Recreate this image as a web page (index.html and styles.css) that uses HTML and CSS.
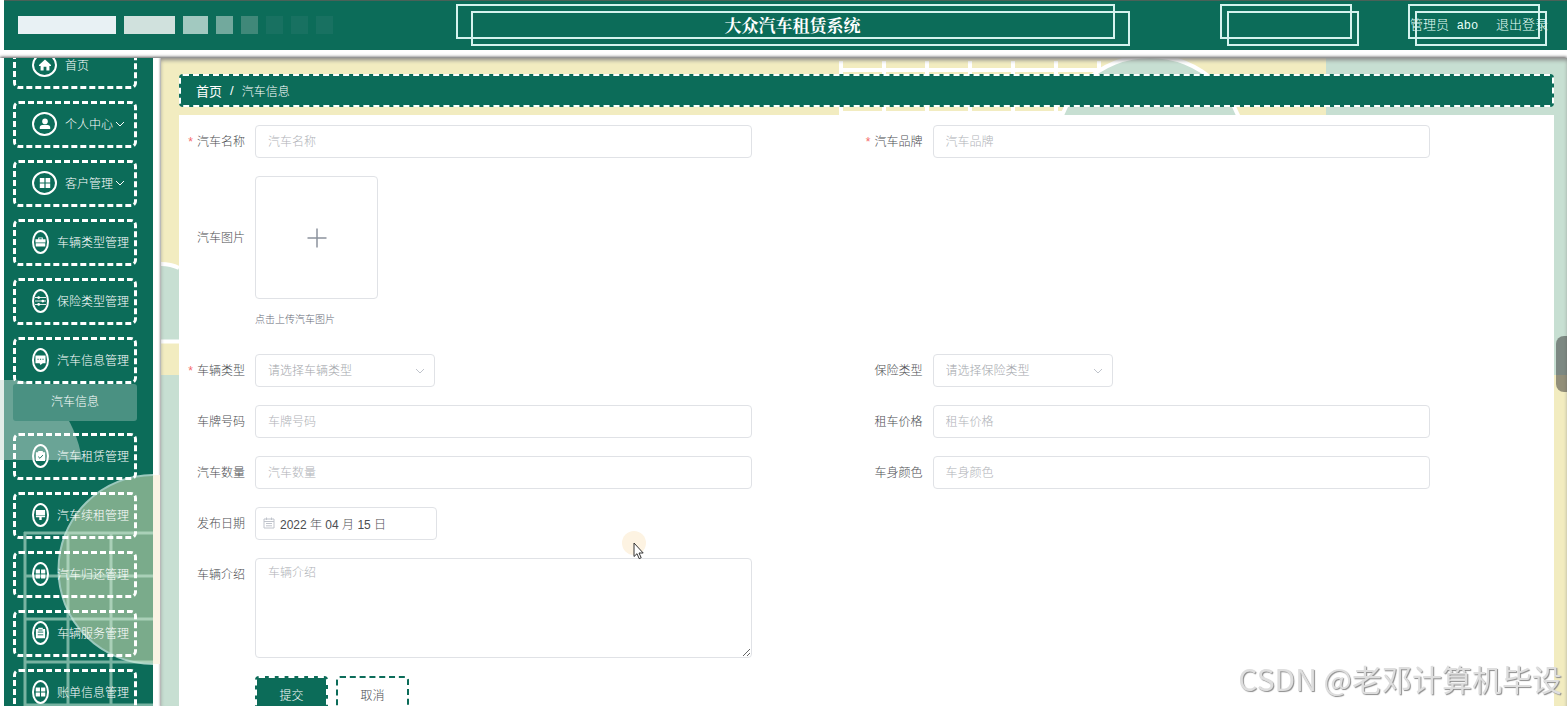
FILE: index.html
```
<!DOCTYPE html>
<html lang="zh-CN">
  <head>
    <meta charset="UTF-8" />
    <meta name="viewport" content="width=device-width, initial-scale=1.0" />
    <title>大众汽车租赁系统</title>
    <link rel="stylesheet" href="styles.css">
  </head>
  <body>
    <svg class="sprite" aria-hidden="true">
      <symbol id="i-home" viewBox="0 0 12 12"><path d="M6 .5 0 6V7H1.600v4.600h3V7.800h2.800v3.800h3V7H12V6z" /></symbol>
      <symbol id="i-user" viewBox="0 0 12 12"><circle cx="6" cy="3.4" r="2.8" /><path d="M0.8 11V9.600Q0.800 7 3.400 7h5.200q2.600 0 2.600 2.600V11z" /></symbol>
      <symbol id="i-menu" viewBox="0 0 12 12"><path d="M0.8 1h4.600v4.400H0.800zM6.600 1h4.600v4.400H6.600zM0.800 6.600h4.600V11H0.800zM6.600 6.600h4.600V11H6.600z" /></symbol>
      <symbol id="i-case" viewBox="0 0 12 12"><path d="M3.500 3V1h5v2H11.500v3.500H.5V3zM4.700 3h2.600V2H4.700zM.8 7.400h10.400V11H.8z" /></symbol>
      <symbol id="i-operation" viewBox="0 0 12 12"><path d="M0 2.200h12M0 6h12M0 9.800h12" fill="none" stroke="currentColor" stroke-width="1" /><circle cx="4" cy="2.200" r="1.500" /><circle cx="8.500" cy="6" r="1.500" /><circle cx="4" cy="9.800" r="1.500" /></symbol>
      <symbol id="i-chat" viewBox="0 0 12 12"><path d="M.5 1h11v8.500H8.500L6 11.500 5 9.500H.5z" /><path d="M2.700 5.200h1.300M5.400 5.200h1.300M8.100 5.200h1.300" stroke="#0c6c59" stroke-width="1.200" /></symbol>
      <symbol id="i-check" viewBox="0 0 12 12"><path d="M1 2h2.500V.5h5V2H11v9.500H1z" /><path d="M3.500 6.700 5.400 8.500 8.600 5" fill="none" stroke="#0c6c59" stroke-width="1" /></symbol>
      <symbol id="i-brush" viewBox="0 0 12 12"><path d="M1 .5h10v6H1zM1 7.200h10v1.300H7.300v3H4.700v-3H1z" /></symbol>
      <symbol id="i-order" viewBox="0 0 12 12"><path d="M1 1.500h2.500V.2h5v1.300H11v10.300H1z" /><path d="M3 5h6M3 8h6M3.800 2.700h4.400" stroke="#0c6c59" stroke-width="1" /></symbol>
      <symbol id="i-down" viewBox="0 0 10 10"><path d="M1 3l4 4 4-4" fill="none" stroke="currentColor" stroke-width="1" /></symbol>
    </svg>

    <header class="header">
      <div class="blocks">
        <i class="block b1"></i><i class="block b2"></i><i class="block b3"></i><i class="block b4"></i>
        <i class="block b5"></i><i class="block b6"></i><i class="block b6"></i><i class="block b6"></i>
      </div>
      <h1 class="frame title">大众汽车租赁系统</h1>
      <div class="frame small"></div>
      <div class="frame small user">
        <span>管理员 <span class="name">abo</span></span>
        <a href="#">退出登录</a>
      </div>
    </header>

    <div class="container">
      <aside class="sidebar">
        <svg class="sidebar-art" viewBox="0 58 160 648" aria-hidden="true">
          <path d="M0 380H14C46 380 76 418 82 460H0z" fill="#c8dcd4" fill-opacity="0.5" />
          <rect x="153" y="475" width="7" height="189" fill="#faf3e4" />
          <path d="M153 475A94.500 94.500 0 0 0 153 664z" fill="#7aab8b" />
          <path d="M153 475A94.500 94.500 0 0 0 153 664" fill="none" stroke="#9cc9bd" stroke-width="2" />
          <path d="M25 532V706M68 532V706M111 532V706M24 533H153M24 576H153M24 619H153M24 662H153M24 705H153" fill="none" stroke="#d2efdf" stroke-opacity="0.55" stroke-width="3" />
        </svg>
        <nav class="menu">
          <a class="item" href="#"><span class="ico"><svg><use href="#i-home" /></svg></span>首页</a>
          <a class="item" href="#"><span class="ico"><svg><use href="#i-user" /></svg></span>个人中心<svg class="arrow"><use href="#i-down" /></svg></a>
          <a class="item" href="#"><span class="ico"><svg><use href="#i-menu" /></svg></span>客户管理<svg class="arrow"><use href="#i-down" /></svg></a>
          <a class="item" href="#"><span class="ico oval"><svg><use href="#i-case" /></svg></span>车辆类型管理</a>
          <a class="item" href="#"><span class="ico oval"><svg><use href="#i-operation" /></svg></span>保险类型管理</a>
          <div class="group">
            <a class="item" href="#"><span class="ico oval"><svg><use href="#i-chat" /></svg></span>汽车信息管理</a>
            <a class="sub" href="#">汽车信息</a>
          </div>
          <a class="item" href="#"><span class="ico oval"><svg><use href="#i-check" /></svg></span>汽车租赁管理</a>
          <a class="item" href="#"><span class="ico oval"><svg><use href="#i-brush" /></svg></span>汽车续租管理</a>
          <a class="item" href="#"><span class="ico oval"><svg><use href="#i-menu" /></svg></span>汽车归还管理</a>
          <a class="item" href="#"><span class="ico oval"><svg><use href="#i-order" /></svg></span>车辆服务管理</a>
          <a class="item" href="#"><span class="ico oval"><svg><use href="#i-menu" /></svg></span>账单信息管理</a>
        </nav>
      </aside>

      <main class="main">
        <svg class="main-art" aria-hidden="true">
          <rect width="100%" height="100%" fill="#f2ecc0" />
          <rect x="1165" width="100%" height="317" fill="#c7dfd2" />
          <rect y="317" width="1165" height="100%" fill="#c7dfd2" />
          <path d="M0 206Q10 206 18 210V282H0z" fill="#c7dfd2" />
          <path d="M0 206Q10 206 18 210M0 283.500H18" fill="none" stroke="#fff" stroke-width="4" />
          <path d="M680 3V60M723 3V60M766 3V60M809 3V60M852 3V60M895 3V60M938 3V14M679 12H938M679 55H920" fill="none" stroke="#fff" stroke-width="4" />
          <circle cx="989" cy="93" r="95" fill="#c7dfd2" stroke="#fff" stroke-width="4" />
        </svg>

        <div class="crumb"><b>首页</b><b class="sep">/</b><span>汽车信息</span></div>

        <form class="form">
          <div class="row">
            <div class="field">
              <label class="required" for="name">汽车名称</label>
              <input class="input" id="name" type="text" placeholder="汽车名称">
            </div>
            <div class="field">
              <label class="required" for="brand">汽车品牌</label>
              <input class="input" id="brand" type="text" placeholder="汽车品牌">
            </div>
          </div>
          <div class="field">
            <label class="upload-label" for="picture">汽车图片</label>
            <div class="upload">
              <button class="upload-box" id="picture" type="button" aria-label="上传">
                <svg width="20" height="20"><path d="M10 0.500v19M0.500 10h19" stroke="#8c939d" stroke-width="1.500" /></svg>
              </button>
              <p class="tip">点击上传汽车图片</p>
            </div>
          </div>
          <div class="row">
            <div class="field">
              <label class="required" for="type">车辆类型</label>
              <div class="select">
                <select class="input" id="type"><option>请选择车辆类型</option></select>
                <svg class="caret"><use href="#i-down" /></svg>
              </div>
            </div>
            <div class="field">
              <label for="insurance">保险类型</label>
              <div class="select">
                <select class="input" id="insurance"><option>请选择保险类型</option></select>
                <svg class="caret"><use href="#i-down" /></svg>
              </div>
            </div>
          </div>
          <div class="row">
            <div class="field">
              <label for="plate">车牌号码</label>
              <input class="input" id="plate" type="text" placeholder="车牌号码">
            </div>
            <div class="field">
              <label for="price">租车价格</label>
              <input class="input" id="price" type="text" placeholder="租车价格">
            </div>
          </div>
          <div class="row">
            <div class="field">
              <label for="count">汽车数量</label>
              <input class="input" id="count" type="text" placeholder="汽车数量">
            </div>
            <div class="field">
              <label for="color">车身颜色</label>
              <input class="input" id="color" type="text" placeholder="车身颜色">
            </div>
          </div>
          <div class="field">
            <label for="date">发布日期</label>
            <div class="date">
              <input class="input" id="date" type="text" value="2022 年 04 月 15 日">
              <svg class="calendar" viewBox="0 0 12 12"><path d="M1 2h10v9H1zM1 4.500h10M3.500 .5V3M8.500 .5V3M3 6.500h6M3 8.800h6" fill="none" stroke="#c0c4cc" /></svg>
            </div>
          </div>
          <div class="field">
            <label for="intro">车辆介绍</label>
            <textarea class="input area" id="intro" placeholder="车辆介绍"></textarea>
          </div>
          <div class="buttons">
            <button class="btn primary" type="submit">提交</button>
            <button class="btn" type="button">取消</button>
          </div>
        </form>
      </main>
    </div>

    <div class="handle"></div>
    <svg class="cursor" viewBox="0 0 26 30" aria-hidden="true">
      <circle cx="12" cy="12" r="12" fill="#fdf3e2" />
      <path d="M12 12v13.500l3-2.800 2.200 5 2-1-2.200-4.700h4.200z" fill="#fff" stroke="#333" stroke-width="1" />
    </svg>
    <div class="watermark">CSDN @老邓计算机毕设</div>
  </body>
</html>
```
FILE: styles.css
```
* {
  box-sizing: border-box;
}

body {
  margin: 0;
  height: 100vh;
  display: flex;
  flex-direction: column;
  overflow: hidden;
  background: #fff;
  color: #4c4e52;
  font-family: "Liberation Sans", "Noto Sans CJK SC", sans-serif;
  font-size: 12px;
  font-weight: 300;
}

a {
  color: inherit;
  text-decoration: none;
}

.sprite {
  display: none;
}

/* header */
.header {
  flex: none;
  display: flex;
  height: 50px;
  margin: 0 0 8px 4px;
  padding: 3px 27px 0 14px;
  border-top: 1px solid #4a6158;
  background: #0c6c59;
  color: #e6fff7;
}

.blocks {
  display: flex;
  gap: 8px;
  width: 438px;
  padding-top: 12px;
}

.block {
  width: 17px;
  height: 18px;
  background: #187161;
}

.b1 {
  width: 98px;
  background: #e8f1f4;
}

.b2 {
  width: 51px;
  background: #d0e1dd;
}

.b3 {
  width: 25px;
  background: #a2c9c0;
}

.b4 {
  background: #72a99d;
}

.b5 {
  background: #408879;
}

.frame {
  position: relative;
  height: 35px;
  border: 2px solid #d5f3ee;
}

.frame::after {
  content: "";
  position: absolute;
  top: 5px;
  left: 5px;
  width: 100%;
  height: 100%;
  box-sizing: content-box;
  border: 2px solid #d5f3ee;
}

.title {
  flex: 1;
  margin: 0 105px 0 0;
  padding-left: 14px;
  text-align: center;
  color: #fff;
  font-family: "Noto Serif CJK SC", "Noto Sans CJK SC", serif;
  font-size: 17px;
  line-height: 38px;
}

.title::after {
  left: 13px;
}

.small {
  width: 132px;
}

.user {
  display: flex;
  justify-content: space-between;
  margin-left: 56px;
  font-size: 13px;
  line-height: 38px;
  white-space: nowrap;
}

.user a {
  margin-right: -10px;
}

.name {
  padding-left: 4px;
  font-family: "Liberation Mono", monospace;
  font-size: 12px;
}

.container {
  flex: 1;
  display: flex;
  min-height: 0;
  overflow: hidden;
  box-shadow: 0 -1px 3px #555;
}

/* sidebar */
.sidebar {
  position: relative;
  flex: none;
  width: 160px;
  padding: 0 7px 0 4px;
  overflow: hidden;
  background: #fff;
}

.sidebar-art {
  position: absolute;
  top: 0;
  left: 0;
  width: 160px;
  height: 648px;
  z-index: 1;
}

.menu {
  display: flex;
  flex-direction: column;
  gap: 12px;
  min-height: 100%;
  margin-top: -16px;
  padding: 0 16px 0 9px;
  background: #0c6c59;
  color: #fff;
}

.item {
  position: relative;
  z-index: 2;
  display: flex;
  align-items: center;
  gap: 8px;
  height: 47px;
  padding: 0 0 2px 16px;
  border: 3px dashed #fff;
  border-radius: 6px;
  white-space: nowrap;
}

.ico {
  flex: none;
  display: flex;
  align-items: center;
  justify-content: center;
  width: 25px;
  height: 24px;
  border: 2px solid #fff;
  border-radius: 50%;
}

.ico svg {
  flex: none;
  width: 12px;
  height: 12px;
  fill: #fff;
}

.oval {
  width: 17px;
}

.oval svg {
  width: 11px;
}

.arrow {
  width: 10px;
  height: 10px;
  margin-left: -6px;
}

.sub {
  position: relative;
  z-index: 2;
  display: block;
  height: 37px;
  border-radius: 3px;
  background: #4a9182;
  text-align: center;
  line-height: 37px;
}

/* content */
.main {
  position: relative;
  flex: 1;
  display: flex;
  flex-direction: column;
  min-width: 0;
  padding: 16px 13px 0 18px;
  margin-left: 1px;
  box-shadow: 0 0 2px 1px #999, inset 0 3px 4px -1px #888;
}

.main-art {
  position: absolute;
  top: 0;
  left: 0;
  width: 100%;
  height: 100%;
  z-index: -1;
}

.crumb {
  flex: none;
  display: flex;
  align-items: center;
  gap: 8px;
  height: 33px;
  padding-left: 15px;
  border: 2px dashed #fff;
  border-radius: 4px;
  background: #0c6c59;
  color: #fff;
}

.crumb b {
  font-size: 13px;
}

.form {
  flex: 1 0 auto;
  display: flex;
  flex-direction: column;
  gap: 18px;
  margin-top: 8px;
  padding: 10px;
  background: #fff;
}

.row {
  display: grid;
  grid-template-columns: 1fr 1fr;
}

.field {
  display: flex;
  align-items: flex-start;
}

.field label {
  flex: none;
  display: flex;
  justify-content: flex-end;
  width: 66px;
  height: 33px;
  padding-right: 10px;
  line-height: 34px;
  white-space: nowrap;
}

.required::before {
  content: "*";
  margin-right: 4px;
  color: #f56c6c;
}

.input {
  display: block;
  flex: 1;
  width: 100%;
  max-width: 497px;
  height: 33px;
  padding: 0 12px;
  border: 1px solid #e0e2e6;
  border-radius: 4px;
  background: #fff;
  color: #4c4e52;
  font: inherit;
  appearance: none;
}

.input::placeholder {
  color: #b0b3b8;
}

.select {
  position: relative;
  width: 180px;
}

.date {
  position: relative;
  width: 182px;
}

select.input {
  color: #a4a7ac;
}

.caret {
  position: absolute;
  top: 12px;
  right: 10px;
  width: 10px;
  height: 10px;
  color: #c0c4cc;
}

.date .input {
  padding-left: 24px;
}

.calendar {
  position: absolute;
  top: 10px;
  left: 8px;
  width: 12px;
  height: 12px;
}

.area {
  height: 100px;
  padding-top: 4px;
  resize: vertical;
}

.field .upload-label {
  height: 123px;
  line-height: 124px;
}

.upload-box {
  display: flex;
  align-items: center;
  justify-content: center;
  width: 123px;
  height: 123px;
  border: 1px solid #e0e2e6;
  border-radius: 4px;
  background: #fff;
}

.tip {
  margin: 0;
  padding-top: 4px;
  color: #666b78;
  font-size: 10px;
  line-height: 33px;
}

.buttons {
  display: flex;
  gap: 8px;
  padding-left: 66px;
}

.btn {
  width: 73px;
  height: 37px;
  border: 2px dashed #0c6c59;
  border-radius: 4px;
  background: #fff;
  color: #4c4e52;
  font: inherit;
}

.primary {
  border-color: #fff;
  background: #0c6c59;
  color: #fff;
}

/* things floating over the page */
.handle {
  position: fixed;
  top: 336px;
  right: 0;
  width: 11px;
  height: 56px;
  border-radius: 8px 0 0 8px;
  background: rgba(50, 50, 50, 0.5);
}

.cursor {
  position: fixed;
  top: 531px;
  left: 622px;
  width: 26px;
  height: 30px;
}

.watermark {
  position: fixed;
  right: 5px;
  bottom: 8px;
  color: #dedede;
  font-family: "Noto Sans CJK SC", sans-serif;
  font-size: 30px;
  font-weight: 400;
  line-height: 40px;
  text-shadow: 1px 1px 1px #8c8c8c;
}
```
